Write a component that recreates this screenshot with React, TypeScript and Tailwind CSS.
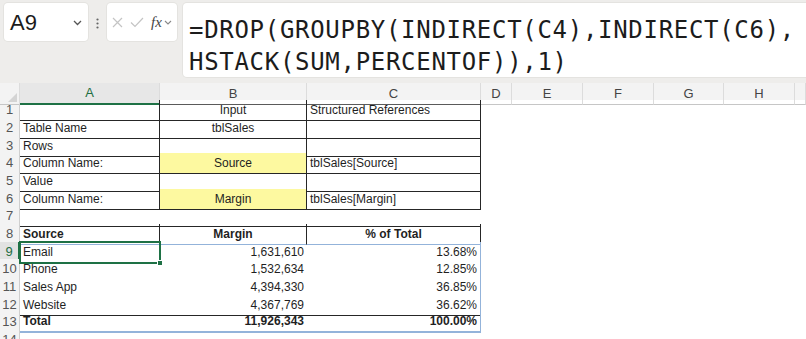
import React from "react";

type Cell = {
  t?: string;
  cls?: string;
};

const colTemplate =
  "grid grid-cols-[20px_140px_147px_174px_31px_71px_71px_70px_71px_1fr]";

const letters = ["A", "B", "C", "D", "E", "F", "G", "H", ""];

const bk = "border-[#262626]";
const blue = "border-[#93b3da]";

// per row: height + cells for A, B, C (D.. are empty)
const rows: { h: string; cells: Cell[] }[] = [
  {
    h: "h-[18px]",
    cells: [
      { cls: `border-r border-b ${bk}` },
      { t: "Input", cls: `justify-center border-r border-b ${bk}` },
      { t: "Structured References", cls: `border-r border-b ${bk}` },
    ],
  },
  {
    h: "h-[18px]",
    cells: [
      { t: "Table Name", cls: `border-r border-b ${bk}` },
      { t: "tblSales", cls: `justify-center border-r border-b ${bk}` },
      { cls: `border-r border-b ${bk}` },
    ],
  },
  {
    h: "h-[17px]",
    cells: [
      { t: "Rows", cls: `border-r border-b ${bk}` },
      { cls: `border-r border-b ${bk}` },
      { cls: `border-r border-b ${bk}` },
    ],
  },
  {
    h: "h-[18px]",
    cells: [
      { t: "Column Name:", cls: `border-r border-b ${bk}` },
      { t: "Source", cls: `justify-center bg-[#fdf9a0] border-r border-b ${bk}` },
      { t: "tblSales[Source]", cls: `border-r border-b ${bk}` },
    ],
  },
  {
    h: "h-[18px]",
    cells: [
      { t: "Value", cls: `border-r border-b ${bk}` },
      { cls: `border-r border-b ${bk}` },
      { cls: `border-r border-b ${bk}` },
    ],
  },
  {
    h: "h-[17px]",
    cells: [
      { t: "Column Name:", cls: `border-r border-b ${bk}` },
      { t: "Margin", cls: `justify-center bg-[#fdf9a0] border-r border-b ${bk}` },
      { t: "tblSales[Margin]", cls: `border-r border-b ${bk}` },
    ],
  },
  {
    h: "h-[18px]",
    cells: [
      { cls: `border-b ${bk}` },
      { cls: `border-b ${bk}` },
      { cls: `border-b ${bk}` },
    ],
  },
  {
    h: "h-[18px]",
    cells: [
      { t: "Source", cls: `font-bold border-r ${bk} border-b-[#93b3da] border-b` },
      { t: "Margin", cls: `justify-center font-bold border-r ${bk} border-b border-b-[#93b3da]` },
      { t: "% of Total", cls: `justify-center font-bold border-r ${bk} border-b border-b-[#93b3da]` },
    ],
  },
  {
    h: "h-[17px]",
    cells: [
      { t: "Email", cls: "relative" },
      { t: "1,631,610", cls: "justify-end" },
      { t: "13.68%", cls: `justify-end border-r ${blue}` },
    ],
  },
  {
    h: "h-[18px]",
    cells: [
      { t: "Phone" },
      { t: "1,532,634", cls: "justify-end" },
      { t: "12.85%", cls: `justify-end border-r ${blue}` },
    ],
  },
  {
    h: "h-[18px]",
    cells: [
      { t: "Sales App" },
      { t: "4,394,330", cls: "justify-end" },
      { t: "36.85%", cls: `justify-end border-r ${blue}` },
    ],
  },
  {
    h: "h-[17px]",
    cells: [
      { t: "Website", cls: `border-b ${bk}` },
      { t: "4,367,769", cls: `justify-end border-b ${bk}` },
      { t: "36.62%", cls: `justify-end border-b border-b-[#262626] border-r ${blue}` },
    ],
  },
  {
    h: "h-[18px]",
    cells: [
      { t: "Total", cls: `font-bold border-b-2 ${blue}` },
      { t: "11,926,343", cls: `justify-end font-bold border-b-2 ${blue}` },
      { t: "100.00%", cls: `justify-end font-bold border-b-2 border-r ${blue}` },
    ],
  },
  {
    h: "h-[18px]",
    cells: [{}, {}, {}],
  },
];

const NameBox = () => (
  <div className="w-[84px] h-[38px] bg-white rounded-[4px] shadow-[0_0_0_1px_#e4e3e0] flex items-center justify-between pl-[6px] pr-[6px]">
    <span className="text-[22px] text-[#1b1b1b] font-['Liberation_Sans',sans-serif]">A9</span>
    <svg width="9" height="6" viewBox="0 0 9 6" className="mt-[2px]">
      <path d="M1 1l3.5 3.5L8 1" fill="none" stroke="#555" strokeWidth="1.3" />
    </svg>
  </div>
);

const FxBox = () => (
  <div className="w-[70px] h-[38px] bg-white rounded-[4px] shadow-[0_0_0_1px_#e4e3e0] flex items-center pl-[5px] gap-[7px]">
    <svg width="11" height="11" viewBox="0 0 11 11">
      <path d="M1 1l9 9M10 1l-9 9" stroke="#c4c4c4" strokeWidth="1.2" />
    </svg>
    <svg width="14" height="11" viewBox="0 0 14 11">
      <path d="M1 5.5l4 4L13 1" fill="none" stroke="#c4c4c4" strokeWidth="1.2" />
    </svg>
    <div className="flex items-center gap-[2px]">
      <span className="text-[15px] italic text-[#444] font-['Liberation_Serif',serif]">fx</span>
      <svg width="8" height="5" viewBox="0 0 8 5">
        <path d="M1 1l3 3 3-3" fill="none" stroke="#888" strokeWidth="1.1" />
      </svg>
    </div>
  </div>
);

const App = () => {
  return (
    <div className="w-[806px] h-[339px] overflow-hidden bg-white font-['Liberation_Sans',sans-serif]">
      {/* formula bar */}
      <div className="bg-[#eeedeb] h-[83px] flex pt-[3px] pl-[4px]">
        <NameBox />
        <div className="w-[19px] flex justify-center pt-[15px]">
          <svg width="3" height="11" viewBox="0 0 3 11">
            <circle cx="1.5" cy="1.5" r="1.1" fill="#666" />
            <circle cx="1.5" cy="5.5" r="1.1" fill="#666" />
            <circle cx="1.5" cy="9.5" r="1.1" fill="#666" />
          </svg>
        </div>
        <FxBox />
        <div className="ml-[6px] flex-1 h-[74px] bg-white rounded-l-[4px] shadow-[0_0_0_1px_#e4e3e0] pl-[6px] pt-[11px] text-[24px] leading-[32px] text-[#1c1c1c] font-['DejaVu_Sans_Mono',monospace] whitespace-pre tracking-[0.7px]">
          <div>=DROP(GROUPBY(INDIRECT(C4),INDIRECT(C6),</div>
          <div>HSTACK(SUM,PERCENTOF)),1)</div>
        </div>
      </div>

      {/* column headers */}
      <div className={`${colTemplate} h-[17px] bg-[#f3f3f3] text-[13px] text-[#444]`}>
        <div className="relative border-r border-[#dcdcdc] border-b border-b-[#c6c6c6]">
          <svg width="9" height="9" viewBox="0 0 9 9" className="absolute right-[2px] bottom-[2px]">
            <path d="M9 0V9H0Z" fill="#d4d4d4" />
          </svg>
        </div>
        {letters.map((l, i) => (
          <div
            key={i}
            className={
              i === 0
                ? "flex items-center justify-center bg-[#e7e7e7] text-[#1e6e42] border-r border-[#dcdcdc] border-b-2 border-b-[#1e7145]"
                : i < 3
                  ? "flex items-center justify-center border-r border-[#dcdcdc] border-b border-b-[#5a5a5a]"
                  : "flex items-center justify-center border-r border-[#dcdcdc] border-b border-b-[#c6c6c6]"
            }
          >
            {l}
          </div>
        ))}
      </div>

      {/* rows */}
      {rows.map((row, r) => (
        <div key={r} className={`${colTemplate} ${row.h} text-[12px] text-[#1f1f1f]`}>
          <div
            className={
              r === 8
                ? "flex items-center justify-center bg-[#e2e2e2] text-[#1e6e42] text-[13px] border-r-2 border-[#1e7145] border-b border-b-[#e0e0e0]"
                : "flex items-center justify-center bg-[#f3f3f3] text-[#555] text-[13px] border-r border-[#cfcfcf] border-b border-b-[#e3e3e3]"
            }
          >
            {r + 1}
          </div>
          {row.cells.map((c, i) => (
            <div
              key={i}
              className={`flex items-center px-[3px] whitespace-nowrap overflow-visible ${c.cls ?? ""}`}
            >
              {c.t}
              {r === 8 && i === 0 && (
                <div className="absolute left-[-1px] top-[-1px] right-[-1px] bottom-[-1px] border-2 border-[#1e7145]">
                  <div className="absolute right-[-4px] bottom-[-4px] w-[6px] h-[6px] bg-[#1e7145] border border-white" />
                </div>
              )}
            </div>
          ))}
          <div />
          <div />
          <div />
          <div />
          <div />
          <div />
        </div>
      ))}
    </div>
  );
};

export default App;
